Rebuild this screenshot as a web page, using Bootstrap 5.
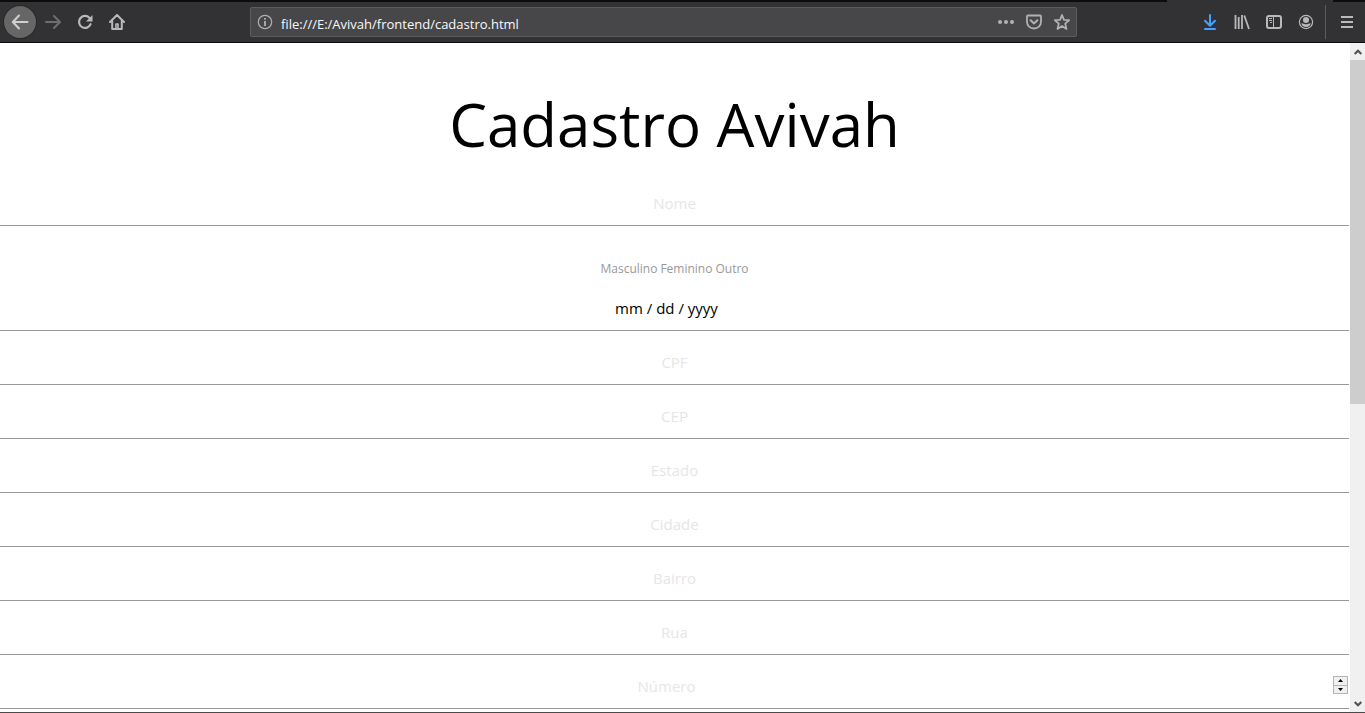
<!DOCTYPE html>
<html lang="pt-BR">
<head>
<meta charset="utf-8">
<meta name="viewport" content="width=device-width, initial-scale=1">
<title>Cadastro Avivah</title>
<link href="https://cdn.jsdelivr.net/npm/bootstrap@5.3.0/dist/css/bootstrap.min.css" rel="stylesheet">
<style>
  body { font-family: "Open Sans", "Noto Sans", sans-serif; color: #000; background: #fff; }
  .window { border-bottom: 1px solid #4a4a4a; }

  /* browser toolbar */
  .tab-edge { height: 2px; background: #0c0c0d; }
  .tab-edge-active { width: 166px; margin-right: 32px; background: #323234; }
  .toolbar { height: 41px; padding-right: 2px; background: #323234; border-bottom: 1px solid #0c0c0d; }
  .tool { width: 32px; height: 32px; color: #b9b9ba; }
  .tool-back { background: #666667; box-shadow: 0 0 0 1px #28282a; color: #d0d0d1; margin: 0 1px 0 4px; }
  .tool-off { color: #6e6e70; }
  .tool-download { color: #45a1ff; }
  .tool svg, .address svg { display: block; }
  .address { height: 30px; margin: 0 117px; padding: 0 0 0 6px; background: #474749; border: 1px solid #5c5c5e; border-radius: 2px; color: #b1b1b3; }
  .address input { height: 28px; font-size: 13px; color: #f9f9fa; }
  .address input:focus { outline: 0; }
  .address button { width: 28px; }
  .separator { width: 1px; height: 34px; margin: 0 5px 0 3px; background: #5c5c5e; }

  /* form */
  .title { font-size: 60px; line-height: 80px; margin: 41px 0 18px; font-weight: 400; }
  .field { height: 44px; margin-bottom: 10px; padding: 0 2px 2px; border: 0; border-bottom: 1px solid #999; border-radius: 0; background: transparent; font-size: 15px; text-align: center; }
  .field::placeholder { color: #e6e6e6; opacity: 1; }
  .field:focus { outline: 0; }
  .field-date::placeholder { color: #000; }
  .field-date, .field-number { padding-right: 18px; }
  .choices { height: 51px; padding-top: 24px; gap: 3px; font-size: 12px; line-height: 18px; color: #999; }
  .spinner { right: 1px; top: 0; width: 15px; height: 18px; gap: 1px; margin-top: 11px; background: #b5b5b5; border: 1px solid #b5b5b5; }
  .spinner button { background: #f0f0f0; }

  /* scrollbar */
  .scroll { width: 15px; margin-left: 1px; background: #f0f0f0; }
  .scroll button { height: 17px; color: #505050; }
  .thumb { height: 54.2%; background: #cdcdcd; }
</style>
</head>
<body>
<div class="window vh-100 d-flex flex-column overflow-hidden">
  <header class="flex-shrink-0">
    <div class="tab-edge d-flex justify-content-end"><div class="tab-edge-active"></div></div>
    <nav class="toolbar d-flex align-items-center" aria-label="Navegador">
      <button class="tool tool-back btn p-0 border-0 rounded-circle d-flex align-items-center justify-content-center" aria-label="Voltar">
        <svg width="18" height="18" viewBox="0 0 18 18" fill="none" stroke="currentColor" stroke-width="2" stroke-linecap="round" stroke-linejoin="round"><path d="M16.500 9H2M8 2.500 1.800 9 8 15.500"/></svg>
      </button>
      <button class="tool tool-off btn p-0 border-0 d-flex align-items-center justify-content-center" aria-label="Avançar">
        <svg width="16" height="16" viewBox="0 0 16 16" fill="none" stroke="currentColor" stroke-width="2" stroke-linecap="round" stroke-linejoin="round"><path d="M1 8h13M9 2l6 6-6 6"/></svg>
      </button>
      <button class="tool btn p-0 border-0 d-flex align-items-center justify-content-center" aria-label="Recarregar">
        <svg width="16" height="16" viewBox="0 0 16 16"><path d="M13.600 10.200A6 6 0 1 1 12.300 3.700" fill="none" stroke="currentColor" stroke-width="2.200" stroke-linecap="round"/><path d="M15.500 1v6.500H9z" fill="currentColor"/></svg>
      </button>
      <button class="tool btn p-0 border-0 d-flex align-items-center justify-content-center" aria-label="Página inicial">
        <svg width="16" height="16" viewBox="0 0 16 16" fill="none" stroke="currentColor" stroke-width="2" stroke-linecap="round" stroke-linejoin="round"><path d="M1 8 8 1l7 7M3.200 7v8h9.600V7"/><path d="M7 14.500v-4.500h2v4.500" stroke-width="1.600"/></svg>
      </button>

      <div class="address d-flex align-items-center flex-grow-1">
        <svg width="16" height="16" viewBox="0 0 16 16" class="flex-shrink-0"><circle cx="8" cy="8" r="6.700" fill="none" stroke="currentColor" stroke-width="1.200"/><path d="M7.100 7h1.800v5H7.100zM7.100 4h1.800v1.800H7.100z" fill="currentColor"/></svg>
        <input class="flex-grow-1 bg-transparent border-0 px-0 pb-0 pt-1 ms-2" type="text" aria-label="Endereço" value="file:///E:/Avivah/frontend/cadastro.html">
        <button class="btn p-0 border-0 text-reset d-flex justify-content-center" aria-label="Ações da página">
          <svg width="16" height="16" viewBox="0 0 16 16" fill="currentColor"><circle cx="2" cy="8" r="2"/><circle cx="8" cy="8" r="2"/><circle cx="14" cy="8" r="2"/></svg>
        </button>
        <button class="btn p-0 border-0 text-reset d-flex justify-content-center" aria-label="Pocket">
          <svg width="16" height="16" viewBox="0 0 16 16" fill="none" stroke="currentColor" stroke-width="2" stroke-linecap="round" stroke-linejoin="round"><path d="M1.800 1.500h12.400q.8 0 .8.800V8A7 6.500 0 0 1 1 8V2.300Q1 1.500 1.800 1.500z" stroke-width="1.800"/><path d="M4.600 6.300 8 9.500l3.400-3.200"/></svg>
        </button>
        <button class="btn p-0 border-0 text-reset d-flex justify-content-center" aria-label="Favoritar">
          <svg width="16" height="16" viewBox="0 0 16 16" fill="none" stroke="currentColor" stroke-width="1.800" stroke-linejoin="round"><path d="m8 1 2 4.800 5.100.4-3.900 3.400 1.300 5.300L8 12.100l-4.500 2.800 1.300-5.300L.9 6.200 6 5.800z"/></svg>
        </button>
      </div>

      <button class="tool tool-download btn p-0 border-0 d-flex align-items-center justify-content-center" aria-label="Downloads">
        <svg width="16" height="16" viewBox="0 0 16 16" fill="none" stroke="currentColor" stroke-width="2" stroke-linecap="round" stroke-linejoin="round"><path d="M8 1v10.500M3 6.800l5 5 5-5M3 15h10"/></svg>
      </button>
      <button class="tool btn p-0 border-0 d-flex align-items-center justify-content-center" aria-label="Biblioteca">
        <svg width="16" height="16" viewBox="0 0 16 16" fill="none" stroke="currentColor" stroke-width="1.800"><path d="M1.500 1v14M4.700 3v12M8 1v14M10.300 1.500 15 15"/></svg>
      </button>
      <button class="tool btn p-0 border-0 d-flex align-items-center justify-content-center" aria-label="Painel lateral">
        <svg width="16" height="16" viewBox="0 0 16 16" fill="none" stroke="currentColor"><rect x="1" y="2" width="14" height="12" rx="2" stroke-width="2"/><path d="M7.500 2v12M3 4.500h3M3 6.500h3M4 8.500h2"/></svg>
      </button>
      <button class="tool btn p-0 border-0 d-flex align-items-center justify-content-center" aria-label="Conta">
        <svg width="16" height="16" viewBox="0 0 16 16" fill="currentColor"><circle cx="8" cy="8" r="6.600" fill="none" stroke="currentColor" stroke-width="1.200"/><circle cx="8" cy="6" r="3"/><path d="M3.300 9.300q2 .6 2.500.4Q8 11 10.200 9.700q.5.200 2.500-.4Q12 13 8 13T3.300 9.300z"/></svg>
      </button>
      <div class="separator"></div>
      <button class="tool btn p-0 border-0 d-flex align-items-center justify-content-center" aria-label="Menu">
        <svg width="16" height="16" viewBox="0 0 16 16" fill="none" stroke="currentColor" stroke-width="2"><path d="M2 3h12M2 8h12M2 13h12"/></svg>
      </button>
    </nav>
  </header>

  <div class="d-flex flex-grow-1 overflow-hidden">
    <main class="flex-grow-1 overflow-hidden">
      <h1 class="title text-center">Cadastro Avivah</h1>
      <form>
        <input class="field d-block w-100" type="text" placeholder="Nome" aria-label="Nome">
        <div class="choices d-flex justify-content-center">
          <input class="visually-hidden" type="radio" name="sexo" id="masculino"><label for="masculino">Masculino</label>
          <input class="visually-hidden" type="radio" name="sexo" id="feminino"><label for="feminino">Feminino</label>
          <input class="visually-hidden" type="radio" name="sexo" id="outro"><label for="outro">Outro</label>
        </div>
        <input class="field field-date d-block w-100" type="text" placeholder="mm / dd / yyyy" aria-label="Data de nascimento">
        <input class="field d-block w-100" type="text" placeholder="CPF" aria-label="CPF">
        <input class="field d-block w-100" type="text" placeholder="CEP" aria-label="CEP">
        <input class="field d-block w-100" type="text" placeholder="Estado" aria-label="Estado">
        <input class="field d-block w-100" type="text" placeholder="Cidade" aria-label="Cidade">
        <input class="field d-block w-100" type="text" placeholder="Bairro" aria-label="Bairro">
        <input class="field d-block w-100" type="text" placeholder="Rua" aria-label="Rua">
        <div class="position-relative">
          <input class="field field-number d-block w-100" type="text" inputmode="numeric" placeholder="Número" aria-label="Número">
          <div class="spinner position-absolute d-flex flex-column">
            <button type="button" class="border-0 p-0 flex-fill d-flex align-items-center justify-content-center" aria-label="Aumentar"><svg width="5" height="3" viewBox="0 0 5 3"><path d="M0 3 2.500 0 5 3z"/></svg></button>
            <button type="button" class="border-0 p-0 flex-fill d-flex align-items-center justify-content-center" aria-label="Diminuir"><svg width="5" height="3" viewBox="0 0 5 3"><path d="M0 0h5L2.500 3z"/></svg></button>
          </div>
        </div>
      </form>
    </main>
    <div class="scroll d-flex flex-column flex-shrink-0">
      <button class="border-0 p-0 bg-transparent d-flex align-items-center justify-content-center" aria-label="Rolar para cima"><svg width="8" height="6" viewBox="0 0 8 6" fill="none" stroke="currentColor" stroke-width="2"><path d="M.7 5 4 1.700 7.300 5"/></svg></button>
      <div class="flex-grow-1"><div class="thumb"></div></div>
      <button class="border-0 p-0 bg-transparent d-flex align-items-center justify-content-center" aria-label="Rolar para baixo"><svg width="8" height="6" viewBox="0 0 8 6" fill="none" stroke="currentColor" stroke-width="2"><path d="M.7 1 4 4.300 7.300 1"/></svg></button>
    </div>
  </div>
</div>
<script src="https://cdn.jsdelivr.net/npm/bootstrap@5.3.0/dist/js/bootstrap.bundle.min.js"></script>
</body>
</html>
